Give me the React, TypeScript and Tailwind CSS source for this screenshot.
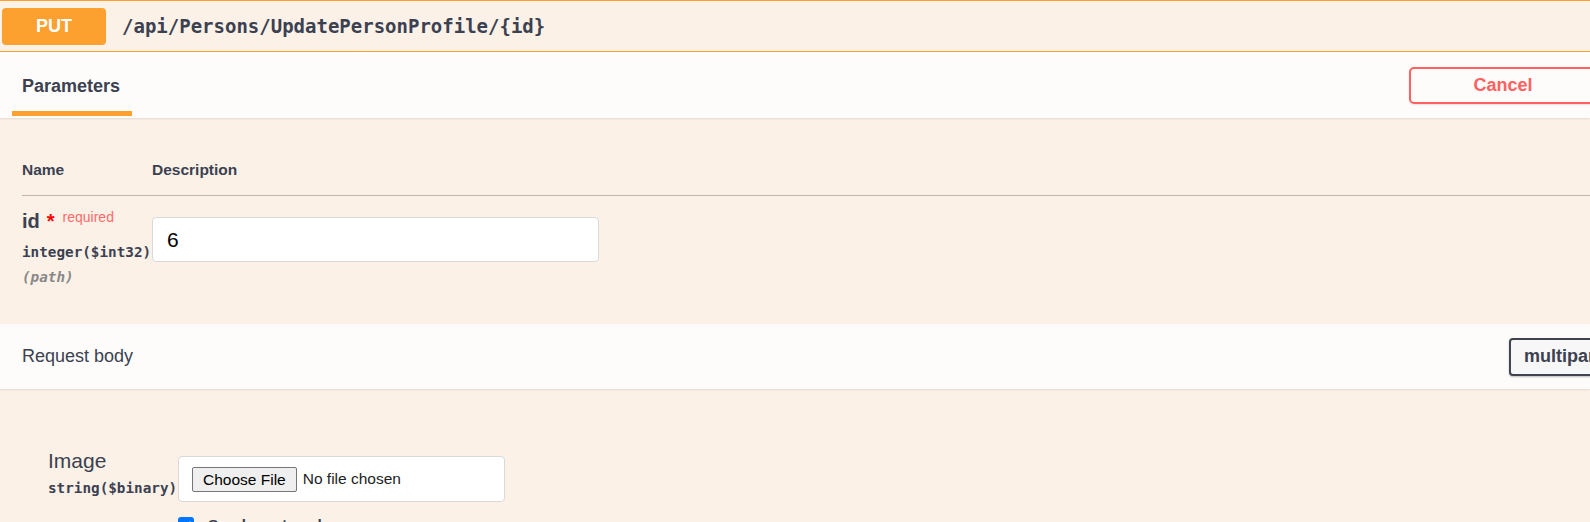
import React from 'react'

const mono = "font-['DejaVu_Sans_Mono',monospace]"

function App() {
  return (
    <div className="h-[522px] w-[1590px] overflow-hidden bg-[#fbf1e7] font-['Liberation_Sans',Arial,sans-serif] text-[#3b4151]">
      {/* Summary */}
      <div className="flex h-[52px] items-center border-y border-[#fca130] pl-[2px]">
        <span className="flex h-[37px] w-[104px] shrink-0 items-center justify-center rounded-[4px] bg-[#fca130] text-[18px] font-bold text-white">
          PUT
        </span>
        <span className={`ml-[16px] ${mono} text-[19px] font-bold`}>
          {'/api/Persons/UpdatePersonProfile/{id}'}
        </span>
      </div>

      {/* Parameters header */}
      <div className="relative z-10 flex h-[66px] items-center bg-[#fefcfa] shadow-[0_1px_2px_rgba(0,0,0,0.1)]">
        <div className="ml-[12px] flex h-full w-[120px] shrink-0 flex-col">
          <span className="pl-[10px] pt-[25px] text-[18px] font-bold leading-[18px]">Parameters</span>
          <span className="mb-[2px] mt-auto h-[5px] bg-[#fca130]" />
        </div>
        <button className="ml-[1277px] h-[37px] w-[188px] shrink-0 rounded-[5px] border-2 border-[#ff6060] text-[18px] font-bold text-[#ff6060] shadow-[0_1px_2px_rgba(0,0,0,0.1)]">
          Cancel
        </button>
      </div>

      {/* Parameters table */}
      <div className="h-[206px] pl-[22px]">
        <div className="flex border-b border-[#bdb7b2] pb-[16px] pt-[43px] text-[15.5px] font-bold leading-[18px]">
          <span className="w-[130px] shrink-0">Name</span>
          <span>Description</span>
        </div>
        <div className="flex items-start">
          <div className="w-[130px] shrink-0 pt-[15px]">
            <div className="whitespace-nowrap text-[20px] font-bold leading-[20px]">
              id
              <span className="ml-[7px] text-[#ff0000]">*</span>
              <span className="relative -top-[6px] ml-[8px] text-[14px] font-normal text-[#ff6b6b]">required</span>
            </div>
            <div className={`mt-[10px] ${mono} whitespace-nowrap text-[14.3px] font-bold leading-[18px]`}>
              integer($int32)
            </div>
            <div className={`mt-[6.5px] ${mono} text-[14.3px] font-bold italic leading-[18px] text-[#888888]`}>
              (path)
            </div>
          </div>
          <div className="mt-[21px] flex h-[45px] w-[447px] shrink-0 items-center rounded-[4px] border border-[#d9d9d9] bg-white pl-[14px] text-[21px] text-black">
            6
          </div>
        </div>
      </div>

      {/* Request body header */}
      <div className="relative z-10 flex h-[65px] items-center bg-[#fefcfa] pl-[22px] shadow-[0_1px_2px_rgba(0,0,0,0.1)]">
        <span className="w-[1487px] shrink-0 text-[18px]">Request body</span>
        <div className="flex h-[38px] shrink-0 items-center whitespace-nowrap rounded-[4px] border-2 border-[#41444e] bg-[#f7f7f7] px-[13px] text-[18px] font-bold shadow-[0_1px_2px_rgba(0,0,0,0.25)]">
          multipart/form-data
        </div>
      </div>

      {/* Request body form */}
      <div className="flex items-start pl-[48px] pt-[61px]">
        <div className="w-[130px] shrink-0">
          <div className="text-[21px] leading-[21px]">Image</div>
          <div className={`mt-[8px] ${mono} whitespace-nowrap text-[14.3px] font-bold leading-[18px]`}>
            string($binary)
          </div>
        </div>
        <div className="mt-[6px]">
          <div className="flex h-[46px] w-[327px] items-center rounded-[4px] border border-[#d9d9d9] bg-white pl-[13px]">
            <span className="h-[25px] rounded-[2px] border border-[#767676] bg-[#efefef] px-[10px] text-[15.5px] leading-[23px] text-black">
              Choose File
            </span>
            <span className="ml-[6px] text-[15.5px] text-[#222222]">No file chosen</span>
          </div>
          <div className="mt-[11px] flex items-center">
            <span className="flex h-[16px] w-[16px] items-center justify-center rounded-[3px] bg-[#0075ff]">
              <svg width="12" height="12" viewBox="0 0 12 12" fill="none">
                <path d="M2 6.5l2.5 2.5L10 3.5" stroke="white" strokeWidth="2" strokeLinecap="round" strokeLinejoin="round" />
              </svg>
            </span>
            <span className="ml-[14px] text-[15.5px] font-bold">Send empty value</span>
          </div>
        </div>
      </div>
    </div>
  )
}

export default App
